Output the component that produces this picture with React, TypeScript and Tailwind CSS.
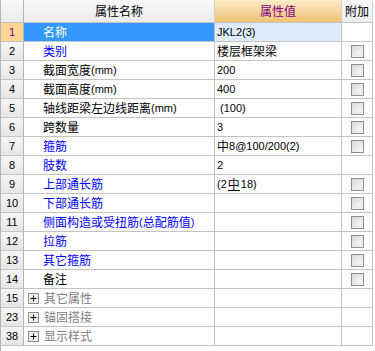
import React from 'react';

type Row = {
  n: number;
  name: string;
  value?: string;
  tone?: 'blue' | 'black';
  check?: boolean;
  group?: boolean;
  selected?: boolean;
};

// '虫' 在这里表示带下划线的钢筋符号
const ROWS: Row[] = [
  { n: 1, name: '名称', value: 'JKL2(3)', tone: 'blue', selected: true },
  { n: 2, name: '类别', value: '楼层框架梁', tone: 'blue', check: true },
  { n: 3, name: '截面宽度(mm)', value: '200', tone: 'black', check: true },
  { n: 4, name: '截面高度(mm)', value: '400', tone: 'black', check: true },
  { n: 5, name: '轴线距梁左边线距离(mm)', value: ' (100)', tone: 'black', check: true },
  { n: 6, name: '跨数量', value: '3', tone: 'black', check: true },
  { n: 7, name: '箍筋', value: '中8@100/200(2)', tone: 'blue', check: true },
  { n: 8, name: '肢数', value: '2', tone: 'blue' },
  { n: 9, name: '上部通长筋', value: '(2虫18)', tone: 'blue', check: true },
  { n: 10, name: '下部通长筋', value: '', tone: 'blue', check: true },
  { n: 11, name: '侧面构造或受扭筋(总配筋值)', value: '', tone: 'blue', check: true },
  { n: 12, name: '拉筋', value: '', tone: 'blue', check: true },
  { n: 13, name: '其它箍筋', value: '', tone: 'blue', check: true },
  { n: 14, name: '备注', value: '', tone: 'black', check: true },
  { n: 15, name: '其它属性', group: true },
  { n: 23, name: '锚固搭接', group: true },
  { n: 38, name: '显示样式', group: true },
];

const font = { fontFamily: '"Noto Sans CJK SC", "Liberation Sans", sans-serif' };

// 半角字符用窄一点的字号，模拟宋体点阵的宽度
const Txt = ({ text }: { text: string }) => {
  const parts = text.match(/[\x20-\x7e]+|[^\x20-\x7e]+/g) ?? [];
  return (
    <>
      {parts.map((p, i) => {
        if (/^[\x20-\x7e]+$/.test(p)) {
          return (
            <span key={i} className="text-[11px] whitespace-pre" style={{ fontFamily: '"Liberation Sans", sans-serif' }}>
              {p}
            </span>
          );
        }
        if (p === '虫') {
          return (
            <span key={i} className="inline-block mx-[1px] leading-[12px] border-b border-black">
              中
            </span>
          );
        }
        return <span key={i}>{p}</span>;
      })}
    </>
  );
};

const CheckBox = () => (
  <div className="w-[13px] h-[13px] border border-[#8e8e8e] bg-gradient-to-br from-[#d4d4d4] to-white p-[1px]">
    <div className="w-full h-full border border-[#e6e6e6] bg-gradient-to-br from-[#dcdcdc] to-[#fbfbfb]" />
  </div>
);

const PlusBox = () => (
  <svg width="11" height="11" viewBox="0 0 11 11" className="shrink-0">
    <rect x="0.5" y="0.5" width="10" height="10" fill="#f0f0f0" stroke="#8c8c8c" />
    <path d="M2.5 5.5h6M5.5 2.5v6" stroke="#000" strokeWidth="1" />
  </svg>
);

export default function App() {
  return (
    <div className="w-[375px] h-[351px] bg-white text-[12px] leading-[18px]" style={font}>
      <div className="w-[373px] border-l border-[#b4b4b4] h-[351px]">
        {/* 表头 */}
        <div className="flex h-[23px] border-b border-[#c4c4c4]">
          <div className="w-[23px] border-r border-[#b4b4b4] bg-gradient-to-b from-[#f8f8f8] to-[#ececec]" />
          <div className="w-[191px] border-r border-[#d0d0d0] bg-gradient-to-b from-[#f8f8f8] to-[#ececec] flex items-center justify-center text-black">
            属性名称
          </div>
          <div className="w-[127px] border-r border-[#d0d0d0] bg-gradient-to-b from-[#fcebc8] to-[#f1c272] flex items-center justify-center text-[#800080]">
            属性值
          </div>
          <div className="w-[31px] border-r border-[#d0d0d0] bg-gradient-to-b from-[#f8f8f8] to-[#ececec] flex items-center justify-center text-black">
            附加
          </div>
        </div>

        {ROWS.map((r) => (
          <div key={r.n} className="flex h-[19px] border-b border-[#c4c4c4]">
            <div
              className={
                r.selected
                  ? 'w-[23px] border-r border-[#b4b4b4] bg-[#fdd597] text-[#800080] flex items-center justify-center'
                  : 'w-[23px] border-r border-[#b4b4b4] bg-gradient-to-b from-[#f6f6f6] to-[#e6e6e6] text-black flex items-center justify-center'
              }
            >
              <Txt text={String(r.n)} />
            </div>
            {r.group ? (
              <div className="w-[191px] border-r border-[#c4c4c4] flex items-center pl-[4px] gap-[5px] text-[#808080]">
                <PlusBox />
                <span>{r.name}</span>
              </div>
            ) : (
              <div
                className={
                  r.selected
                    ? 'w-[191px] border-r border-[#c4c4c4] bg-[#3399ff] text-white flex items-center pl-[19px]'
                    : r.tone === 'blue'
                    ? 'w-[191px] border-r border-[#c4c4c4] text-[#0000ff] flex items-center pl-[19px] whitespace-nowrap'
                    : 'w-[191px] border-r border-[#c4c4c4] text-black flex items-center pl-[19px] whitespace-nowrap'
                }
              >
                <Txt text={r.name} />
              </div>
            )}
            <div
              className={
                r.selected
                  ? 'w-[127px] border-r border-[#c4c4c4] bg-[#ddebfd] text-black flex items-center pl-[2px]'
                  : 'w-[127px] border-r border-[#c4c4c4] text-black flex items-center pl-[2px] whitespace-nowrap'
              }
            >
              {r.group || !r.value ? null : <Txt text={r.value} />}
            </div>
            <div className="w-[31px] border-r border-[#c4c4c4] flex items-center justify-center">
              {r.check ? <CheckBox /> : null}
            </div>
          </div>
        ))}
      </div>
    </div>
  );
}
